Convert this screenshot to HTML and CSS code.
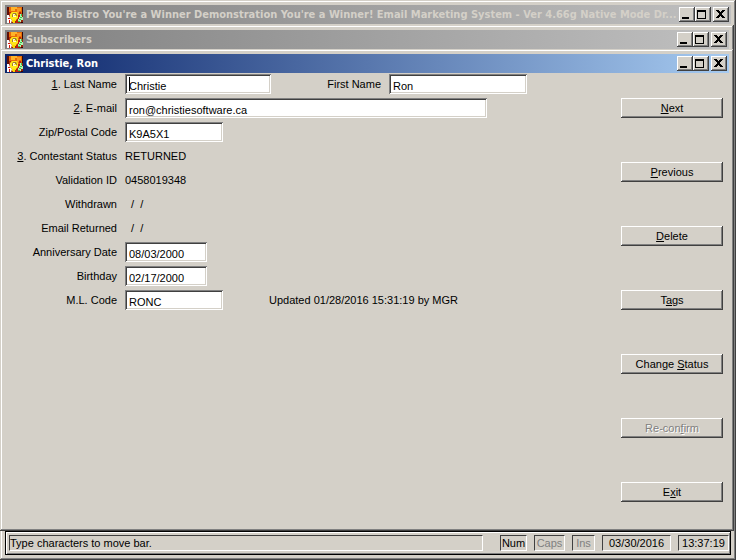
FILE: index.html
```html
<!DOCTYPE html>
<html lang="en">
<head>
    <meta charset="UTF-8">
    <meta name="viewport" content="width=device-width, initial-scale=1.0">
    <title>Presto Bistro - Christie, Ron</title>
    <link rel="stylesheet" href="styles.css">
</head>
<body>
    <!-- Icons shared by the three title bars -->
    <svg class="sprite" aria-hidden="true">
        <symbol id="appIcon" viewBox="0 0 16 16">
            <rect width="16" height="16" fill="#9c2408"/>
            <path d="M2 0h13v6l-2 3H4L2 7z" fill="#e86a08"/>
            <path d="M4 0h6v2H8v2H4z" fill="#ffb428"/>
            <path d="M10 1h4v3h-2v2h-2z" fill="#f89820"/>
            <path d="M0 0h2v8H0z" fill="#601008"/>
            <path d="M2 5h2v3H2zM12 5h2v2h-2z" fill="#b82c08"/>
            <path d="M0 8h2l1 3 2 2-1 3H0z" fill="#fff"/>
            <path d="M1 11h2v1H1zM2 13h1v3H2z" fill="#d81808"/>
            <path d="M10 8h3v4l-2 4H9z" fill="#c02010"/>
            <path d="M5 5h5l1 2v4l-2 2H5l-2-2V7z" fill="#ffe818"/>
            <path d="M6 6h3l1 2v1H9V8H8V7H6v3H5V8z" fill="#a08030"/>
            <path d="M6 7h2v1H7v1h2v1H6z" fill="#fff8d0"/>
            <path d="M5 13h4v1H8v2H6v-1H5z" fill="#f8d800"/>
            <path d="M13 7h2v3h1v3h-2v2h-3v-3h1v-2h1z" fill="#b8f0b0"/>
            <path d="M14 7h1v2h-1zM13 10h2v1h-2zM12 12h2v1h-2zM11 14h2v1h-2z" fill="#30c850"/>
            <path d="M15 0h1v7h-1zM14 15h2v1h-2z" fill="#300808"/>
        </symbol>
        <symbol id="minIcon" viewBox="0 0 12 11">
            <path d="M1 8h7v2H1z"/>
        </symbol>
        <symbol id="maxIcon" viewBox="0 0 12 11">
            <path d="M0 1h9v9H0zM1 3v6h7V3z" fill-rule="evenodd"/>
        </symbol>
        <symbol id="closeIcon" viewBox="0 0 12 11">
            <path d="M1 1h3v1h1v1h1V2h1V1h3v1H9v1H8v1H7v2h1v1h1v1h1v1H7V8H6V7H5v1H4v1H1V8h1V7h1V6h1V4H3V3H2V2H1z"/>
        </symbol>
    </svg>

    <div class="window main-window">
        <div class="title-bar">
            <svg class="app-icon"><use href="#appIcon"/></svg>
            <span class="title">Presto Bistro You're a Winner Demonstration You're a Winner! Email Marketing System - Ver 4.66g Native Mode Dr...</span>
            <button class="tool" aria-label="Minimize"><svg><use href="#minIcon"/></svg></button>
            <button class="tool" aria-label="Maximize"><svg><use href="#maxIcon"/></svg></button>
            <button class="tool close" aria-label="Close"><svg><use href="#closeIcon"/></svg></button>
        </div>

        <div class="window child-window">
            <div class="title-bar">
                <svg class="app-icon"><use href="#appIcon"/></svg>
                <span class="title">Subscribers</span>
                <button class="tool" aria-label="Minimize"><svg><use href="#minIcon"/></svg></button>
                <button class="tool" aria-label="Maximize"><svg><use href="#maxIcon"/></svg></button>
                <button class="tool close" aria-label="Close"><svg><use href="#closeIcon"/></svg></button>
            </div>

            <div class="window record-window">
                <div class="title-bar active">
                    <svg class="app-icon"><use href="#appIcon"/></svg>
                    <span class="title">Christie, Ron</span>
                    <button class="tool" aria-label="Minimize"><svg><use href="#minIcon"/></svg></button>
                    <button class="tool" aria-label="Maximize"><svg><use href="#maxIcon"/></svg></button>
                    <button class="tool close" aria-label="Close"><svg><use href="#closeIcon"/></svg></button>
                </div>

                <form class="record" onsubmit="return false">
                    <div class="fields">
                        <label for="lastName"><u>1</u>. Last Name</label>
                        <div class="row">
                            <span class="caret-box"><input type="text" id="lastName" class="last-name" value="Christie"></span>
                            <label for="firstName" class="first-label">First Name</label>
                            <input type="text" id="firstName" class="first-name" value="Ron">
                        </div>

                        <label for="email"><u>2</u>. E-mail</label>
                        <div class="row"><input type="text" id="email" class="email" value="ron@christiesoftware.ca"></div>

                        <label for="zip">Zip/Postal Code</label>
                        <div class="row"><input type="text" id="zip" class="code" value="K9A5X1"></div>

                        <label for="status"><u>3</u>. Contestant Status</label>
                        <output id="status">RETURNED</output>

                        <label for="validation">Validation ID</label>
                        <output id="validation">0458019348</output>

                        <label for="withdrawn">Withdrawn</label>
                        <output id="withdrawn" class="empty-date">/&nbsp; /</output>

                        <label for="returned">Email Returned</label>
                        <output id="returned" class="empty-date">/&nbsp; /</output>

                        <label for="anniversary">Anniversary Date</label>
                        <div class="row"><input type="text" id="anniversary" class="date" value="08/03/2000"></div>

                        <label for="birthday">Birthday</label>
                        <div class="row"><input type="text" id="birthday" class="date" value="02/17/2000"></div>

                        <label for="mlCode">M.L. Code</label>
                        <div class="row">
                            <input type="text" id="mlCode" class="code" value="RONC">
                            <span class="updated">Updated 01/28/2016 15:31:19 by MGR</span>
                        </div>
                    </div>

                    <div class="actions">
                        <button type="button"><u>N</u>ext</button>
                        <button type="button"><u>P</u>revious</button>
                        <button type="button"><u>D</u>elete</button>
                        <button type="button">T<u>a</u>gs</button>
                        <button type="button">Change <u>S</u>tatus</button>
                        <button type="button" disabled>Re-con<u>f</u>irm</button>
                        <button type="button">E<u>x</u>it</button>
                    </div>
                </form>
            </div>
        </div>

        <div class="status-bar">
            <span class="panel message">Type characters to move bar.</span>
            <span class="panel num">Num</span>
            <span class="panel caps off">Caps</span>
            <span class="panel ins off">Ins</span>
            <span class="panel today">03/30/2016</span>
            <span class="panel clock">13:37:19</span>
        </div>
    </div>
</body>
</html>
```

FILE: styles.css
```css
* {
    box-sizing: border-box;
}

body {
    margin: 0;
    background-color: #d4d0c8;
    color: #000;
    font-family: 'Liberation Sans', Arial, sans-serif;
    font-size: 11px;
    line-height: 16px;
}

.sprite {
    position: absolute;
    width: 0;
    height: 0;
}

/* Windows */
.window {
    display: flex;
    flex-direction: column;
    background-color: #d4d0c8;
    box-shadow: inset -1px -1px #404040, inset 1px 1px #d4d0c8, inset -2px -2px #808080, inset 2px 2px #fff;
    padding-top: 5px;
}

.main-window {
    min-height: 100vh;
    padding-bottom: 5px;
}

.child-window {
    flex: 1;
    margin: 1px 2px 0 0;
}

.record-window {
    flex: 1;
}

.title-bar {
    display: flex;
    align-items: center;
    height: 19px;
    margin: 0 5px;
    padding: 0 2px;
    background: linear-gradient(to right, #808080, #c0c0c0);
    color: #d4d0c8;
    font-family: 'DejaVu Sans Condensed', 'DejaVu Sans', sans-serif;
    font-size: 11px;
    font-weight: bold;
}

.title-bar.active {
    background: linear-gradient(to right, #0a246a, #a6caf0);
    color: #fff;
}

.app-icon {
    flex: none;
    width: 16px;
    height: 16px;
    margin-right: 3px;
}

.title {
    flex: 1;
    min-width: 0;
    overflow: hidden;
    white-space: nowrap;
}

.tool {
    flex: none;
    width: 16px;
    height: 15px;
    padding: 2px;
    border: none;
    background-color: #d4d0c8;
    box-shadow: inset -1px -1px #404040, inset 1px 1px #fff, inset -2px -2px #808080;
}

.tool svg {
    display: block;
    width: 12px;
    height: 11px;
}

.close {
    margin-left: 2px;
}

/* Subscriber record */
.record {
    display: flex;
    flex: 1;
    justify-content: space-between;
    margin: 1px 11px 0 5px;
}

.fields {
    display: grid;
    grid-template-columns: 112px auto;
    grid-auto-rows: 20px;
    align-content: start;
    align-items: center;
    gap: 4px 8px;
    white-space: nowrap;
}

.fields > label {
    text-align: right;
}

.row {
    display: flex;
    align-items: center;
}

input {
    height: 20px;
    padding: 3px 2px 0 4px;
    border: none;
    background-color: #fff;
    box-shadow: inset 1px 1px #808080, inset -1px -1px #fff, inset 2px 2px #404040, inset -2px -2px #d4d0c8;
    color: #000;
    font: inherit;
}

.caret-box {
    position: relative;
    display: flex;
}

/* Text cursor in the field being edited */
.caret-box::after {
    content: "";
    position: absolute;
    left: 4px;
    top: 3px;
    width: 1px;
    height: 14px;
    background-color: #000;
}

.last-name { width: 146px; }
.first-name { width: 138px; }
.email { width: 362px; }
.code { width: 98px; }
.date { width: 82px; }

.first-label {
    width: 110px;
    margin-right: 8px;
    text-align: right;
}

.empty-date {
    padding-left: 6px;
}

.updated {
    margin-left: 46px;
}

.actions {
    display: flex;
    flex-direction: column;
    gap: 44px;
    width: 102px;
    padding: 24px 0;
}

.actions button {
    height: 20px;
    padding: 0;
    border: none;
    background-color: #d4d0c8;
    box-shadow: inset -1px -1px #404040, inset 1px 1px #fff, inset -2px -2px #808080;
    color: #000;
    font: inherit;
}

.actions button:disabled {
    color: #808080;
    text-shadow: 1px 1px #fff;
}

/* Status bar */
.status-bar {
    display: flex;
    align-items: center;
    gap: 7px;
    height: 24px;
    margin: 0 5px;
    padding: 0 1px 0 3px;
    border: 1px solid #000;
    box-shadow: inset 1px 1px #fff, inset -1px -1px #808080;
    font-size: 11px;
}

.panel {
    height: 16px;
    line-height: 14px;
    border: 1px solid #fff;
    border-top-color: #404040;
    border-left-color: #404040;
    text-align: center;
    white-space: nowrap;
}

.message {
    flex: 1;
    margin-right: 10px;
    text-align: left;
}

.num { width: 27px; }
.caps { width: 31px; }
.ins { width: 23px; }
.today { width: 69px; }
.clock { width: 51px; }

.off {
    color: #808080;
}
```
